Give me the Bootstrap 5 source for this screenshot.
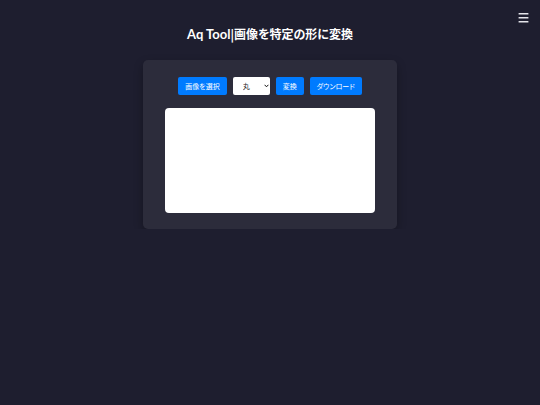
<!DOCTYPE html>
<html lang="ja">
<head>
<meta charset="utf-8">
<meta name="viewport" content="width=device-width, initial-scale=1">
<title>Aq Tool|画像を特定の形に変換</title>
<link href="https://cdn.jsdelivr.net/npm/bootstrap@5.3.0/dist/css/bootstrap.min.css" rel="stylesheet">
<style>
body { background: #1e1e2f; color: #fff; font-family: "Noto Sans CJK JP", sans-serif; font-feature-settings: "palt"; }
.menu-toggle { top: 12px; right: 11px; line-height: 0; }
.page-title { font-family: "Noto Sans CJK JP", sans-serif; font-size: 12px; line-height: 16px; font-weight: 700; margin: 26px 0 18px; }
.brand-name { font-family: Lato, sans-serif; font-size: 13px; }
.tool-panel { width: 100%; max-width: 254px; padding: 17px 22px 16px; background: #2c2c3b; border-radius: 5px; box-shadow: 0 4px 10px rgba(0, 0, 0, .3); }
.controls { gap: 6px; margin-bottom: 13px; }
.tool-btn { --bs-btn-padding-x: 7px; --bs-btn-padding-y: 0; --bs-btn-font-size: 7px; --bs-btn-border-radius: 2px; --bs-btn-border-width: 0; --bs-btn-bg: #007bff; --bs-btn-hover-bg: #0069d9; line-height: 18px; font-feature-settings: "palt"; }
.shape-select { width: 37px; height: 18px; padding: 0 10px; border: 0; border-radius: 2px; font-size: 7px; line-height: 18px; color: #222; background-color: #fff; background-image: none; }
.select-arrow { right: 1px; top: 7px; }
.preview { display: block; width: 100%; height: 105px; background: #fff; border-radius: 4px; }
</style>
<script src="https://cdn.jsdelivr.net/npm/bootstrap@5.3.0/dist/js/bootstrap.bundle.min.js" defer></script>
</head>
<body>
<button type="button" class="menu-toggle btn position-absolute p-0 border-0" aria-label="メニュー">
<svg width="11" height="11" viewBox="0 0 11 11" fill="none" stroke="#e4e4ea" stroke-width="1.5"><path d="M.6 1.7h9.8M.6 5.8h9.8M.6 9.8h9.8"/></svg>
</button>
<main class="d-flex flex-column align-items-center">
<h1 class="page-title text-center"><span class="brand-name">Aq Tool</span>|画像を特定の形に変換</h1>
<section class="tool-panel">
<div class="controls d-flex justify-content-center align-items-center">
<button type="button" class="tool-btn btn btn-primary">画像を選択</button>
<div class="position-relative d-flex">
<select class="shape-select form-select" aria-label="形"><option>丸</option><option>三角</option><option>星</option></select>
<svg class="select-arrow position-absolute pe-none" width="5" height="4" viewBox="0 0 5 4" fill="none" stroke="#111" stroke-width="1"><path d="M.6.8 2.5 2.8 4.4.8"/></svg>
</div>
<button type="button" class="tool-btn btn btn-primary">変換</button>
<button type="button" class="tool-btn btn btn-primary">ダウンロード</button>
</div>
<canvas class="preview" aria-label="プレビュー"></canvas>
</section>
</main>
</body>
</html>
